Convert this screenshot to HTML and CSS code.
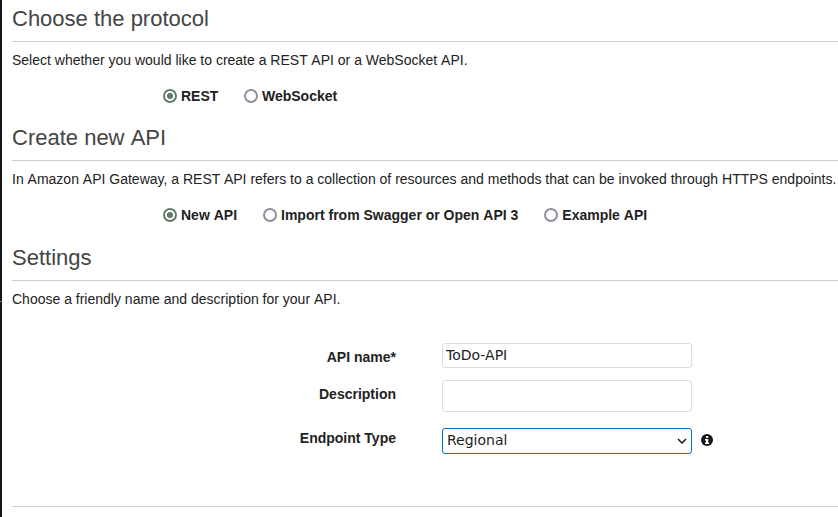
FILE: index.html
```html
<!DOCTYPE html>
<html lang="en">
<head>
<meta charset="utf-8">
<title>Create API</title>
<link rel="stylesheet" href="styles.css">
</head>
<body>
<main class="page">
  <section class="section">
    <h2 class="title">Choose the protocol</h2>
    <p class="intro">Select whether you would like to create a REST <span class="word">API</span> or a WebSocket <span class="word">API.</span></p>
    <div class="options">
      <label class="option"><input type="radio" name="protocol" checked>REST</label>
      <label class="option option-websocket"><input type="radio" name="protocol">WebSocket</label>
    </div>
  </section>
  <section class="section section-create">
    <h2 class="title">Create new <span class="word">API</span></h2>
    <p class="intro">In <span class="word">Amazon</span> <span class="word">API</span> Gateway, a REST <span class="word">API</span> refers to a collection of resources and methods that can be invoked through HTTPS endpoints.</p>
    <div class="options">
      <label class="option"><input type="radio" name="source" checked><span>New <span class="word">API</span></span></label>
      <label class="option"><input type="radio" name="source"><span>Import from Swagger or Open <span class="word">API</span> 3</span></label>
      <label class="option"><input type="radio" name="source"><span>Example <span class="word">API</span></span></label>
    </div>
  </section>
  <section class="section section-settings">
    <h2 class="title">Settings</h2>
    <p class="intro">Choose a friendly name and description for your <span class="word">API.</span></p>
    <form class="form">
      <div class="field field-name">
        <label class="label" for="name">API name*</label>
        <input class="control" id="name" type="text" value="ToDo-API">
      </div>
      <div class="field field-description">
        <label class="label" for="description">Description</label>
        <input class="control" id="description" type="text">
      </div>
      <div class="field field-endpoint">
        <label class="label" for="endpoint">Endpoint Type</label>
        <div class="select">
          <select class="control" id="endpoint"><option>Regional</option></select>
          <svg class="chevron" viewBox="0 0 10 6"><path d="M1 1l4 4 4-4"/></svg>
        </div>
        <svg class="info" viewBox="0 0 12 12"><circle cx="6" cy="6" r="6"/><path d="M5 2h2.2v2H5zM4 5h3.2v3.4H8V10H4V8.4h1V6.4H4z"/></svg>
      </div>
    </form>
  </section>
</main>
</body>
</html>
```
FILE: styles.css
```css
* { box-sizing: border-box; }
body {
  margin: 0;
  overflow: hidden;
  background: #fff;
  color: #222;
  font: 14px/20px "Liberation Sans", Arial, sans-serif;
}
.page {
  height: 517px;
  padding-left: 10px;
  border-left: 2px solid;
  border-image: linear-gradient(#17171a 301px, #77777a 301px, #77777a 302px, #17171a 302px) 0 0 0 2;
}
.section { height: 119px; }
.section-create { height: 120px; }
.section-settings { height: 268px; border-bottom: 1px solid #ccc; }
.title {
  height: 42px;
  margin: 0;
  padding-top: 4px;
  border-bottom: 1px solid #ccc;
  color: #444;
  font-size: 22px;
  font-weight: 400;
  line-height: 30px;
}
.intro { margin: 8px 0 0; white-space: nowrap; }
/* Keeps the space before a capital A at its full width. */
.word { display: inline-block; }
.options {
  display: flex;
  gap: 26px;
  margin: 16px 0 0 151px;
}
.option {
  display: flex;
  align-items: center;
  gap: 4px;
  font-weight: 700;
  white-space: nowrap;
}
.option-websocket { gap: 3.6px; }
.option input {
  appearance: none;
  width: 14px;
  height: 14px;
  margin: 0;
  border: 2px solid #8f8f9d;
  border-radius: 50%;
  background: #fff;
}
.option input:checked {
  border-color: #647b6b;
  background: radial-gradient(circle, #647b6b 2.8px, #fff 3.4px);
}
.form { margin-top: 34px; }
.field { display: flex; }
.label {
  width: 384px;
  margin-right: 46px;
  padding-top: 4px;
  font-weight: 700;
  text-align: right;
}
.control {
  appearance: none;
  display: block;
  width: 250px;
  margin: 0;
  border: 1px solid #ddd;
  border-radius: 3px;
  background: #fff;
  color: #222;
  outline: 0;
  font: 14px/18px "DejaVu Sans", sans-serif;
}
.field-name .control { height: 25px; padding: 0 3px 1px; }
.field-description { margin-top: 12px; }
.field-description .control { height: 32px; }
.field-endpoint { margin-top: 16px; }
.field-endpoint .label { padding-top: 0; }
.select { position: relative; }
.select .control { height: 26px; padding: 0 4px 3px; border-color: #0073bb; }
.chevron {
  position: absolute;
  top: 10px;
  right: 5px;
  width: 10px;
  height: 6px;
  fill: none;
  stroke: #222;
  stroke-width: 1.6;
}
.info { width: 12px; height: 12px; margin: 6px 0 0 9px; fill: #16191f; }
.info path { fill: #fff; }
```
